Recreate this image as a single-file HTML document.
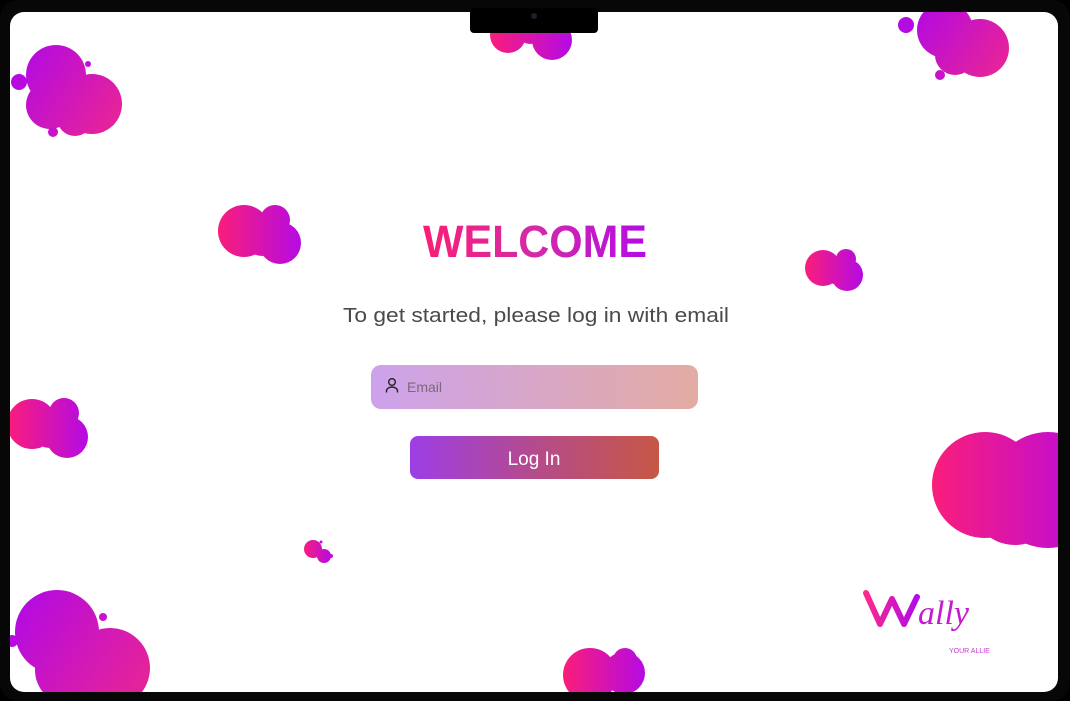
<!DOCTYPE html>
<html><head><meta charset="utf-8"><style>
html,body{margin:0;padding:0;background:#000;width:1070px;height:701px;overflow:hidden}
svg{display:block}
</style></head><body>
<svg width="1070" height="701" viewBox="0 0 1070 701" xmlns="http://www.w3.org/2000/svg">
<defs>
<linearGradient id="pp" x1="0" y1="0" x2="1" y2="0.6"><stop offset="0" stop-color="#b008e6"/><stop offset="1" stop-color="#e4229c"/></linearGradient>
<linearGradient id="kp" x1="0" y1="0" x2="1" y2="0"><stop offset="0" stop-color="#fa1e7a"/><stop offset="1" stop-color="#b40ae4"/></linearGradient>
<linearGradient id="wel" x1="0" y1="0" x2="1" y2="0"><stop offset="0" stop-color="#fb1d75"/><stop offset="0.5" stop-color="#d42aa8"/><stop offset="1" stop-color="#b40ae6"/></linearGradient>
<linearGradient id="inp" x1="0" y1="0" x2="1" y2="0"><stop offset="0" stop-color="#cda2ec"/><stop offset="1" stop-color="#e2aba2"/></linearGradient>
<linearGradient id="btn" x1="0" y1="0" x2="1" y2="0"><stop offset="0" stop-color="#9d3ee6"/><stop offset="0.5" stop-color="#b44b8c"/><stop offset="1" stop-color="#c75745"/></linearGradient>
<linearGradient id="wl" x1="0" y1="0" x2="1" y2="0"><stop offset="0" stop-color="#fb2a8e"/><stop offset="1" stop-color="#b20ae8"/></linearGradient>
<clipPath id="scr"><rect x="10" y="12" width="1048" height="680" rx="14"/></clipPath>
<mask id="m1"><g fill="#fff"><circle cx="56" cy="75" r="30"/><circle cx="92" cy="104" r="30"/><circle cx="50" cy="105" r="24"/><circle cx="75" cy="118" r="18"/></g></mask>
<mask id="m2"><g fill="#fff"><circle cx="508" cy="35" r="18"/><circle cx="552" cy="40" r="20"/><circle cx="530" cy="30" r="14"/></g></mask>
<mask id="m3"><g fill="#fff"><circle cx="945" cy="30" r="28"/><circle cx="980" cy="48" r="29"/><circle cx="955" cy="55" r="20"/></g></mask>
<mask id="m4"><g fill="#fff"><circle cx="244" cy="231" r="26"/><circle cx="280" cy="243" r="21"/><circle cx="275" cy="220" r="15"/><circle cx="262" cy="238" r="18"/></g></mask>
<mask id="m5"><g fill="#fff"><circle cx="823" cy="268" r="18"/><circle cx="847" cy="275" r="16"/><circle cx="846" cy="259" r="10"/><circle cx="835" cy="270" r="14"/></g></mask>
<mask id="m6"><g fill="#fff"><circle cx="32" cy="424" r="25"/><circle cx="67" cy="437" r="21"/><circle cx="64" cy="413" r="15"/><circle cx="50" cy="428" r="20"/></g></mask>
<mask id="m7"><g fill="#fff"><circle cx="985" cy="485" r="53"/><circle cx="1048" cy="490" r="58"/><circle cx="1015" cy="500" r="45"/></g></mask>
<mask id="m8"><g fill="#fff"><circle cx="313" cy="549" r="9"/><circle cx="324" cy="556" r="7"/></g></mask>
<mask id="m9"><g fill="#fff"><circle cx="57" cy="632" r="42"/><circle cx="110" cy="668" r="40"/><circle cx="70" cy="670" r="35"/></g></mask>
<mask id="m10"><g fill="#fff"><circle cx="590" cy="675" r="27"/><circle cx="624" cy="673" r="21"/><circle cx="625" cy="660" r="12"/></g></mask>
</defs>
<rect x="0" y="0" width="1070" height="701" rx="18" fill="#070707"/>
<rect x="10" y="12" width="1048" height="680" rx="14" fill="#fff"/>
<g clip-path="url(#scr)">
<rect x="20" y="45" width="102" height="93" fill="url(#pp)" mask="url(#m1)"/>
<circle cx="19" cy="82" r="8" fill="#b80ae0"/><circle cx="88" cy="64" r="3" fill="#c010d8"/><circle cx="53" cy="132" r="5" fill="#c812c8"/>
<rect x="490" y="16" width="82" height="46" fill="url(#kp)" mask="url(#m2)"/>
<rect x="917" y="0" width="92" height="80" fill="url(#pp)" mask="url(#m3)"/>
<circle cx="906" cy="25" r="8" fill="#b60ae2"/><circle cx="940" cy="75" r="5" fill="#c812cc"/>
<rect x="218" y="204" width="84" height="62" fill="url(#kp)" mask="url(#m4)"/>
<rect x="805" y="249" width="58" height="43" fill="url(#kp)" mask="url(#m5)"/>
<rect x="7" y="397" width="81" height="62" fill="url(#kp)" mask="url(#m6)"/>
<rect x="932" y="430" width="175" height="120" fill="url(#kp)" mask="url(#m7)"/>
<rect x="303" y="539" width="29" height="25" fill="url(#kp)" mask="url(#m8)"/>
<circle cx="331" cy="556" r="2" fill="#c010d8"/><circle cx="321" cy="542" r="1.5" fill="#c010d8"/>
<rect x="15" y="590" width="136" height="120" fill="url(#pp)" mask="url(#m9)"/>
<circle cx="103" cy="617" r="4" fill="#c812cc"/><circle cx="12" cy="641" r="6" fill="#b80ae0"/>
<rect x="563" y="647" width="83" height="56" fill="url(#kp)" mask="url(#m10)"/>
</g>
<rect x="470" y="8" width="128" height="25" rx="4" fill="#000"/>
<circle cx="534" cy="16" r="3" fill="#1a2230"/>
<text x="423" y="257" textLength="224" lengthAdjust="spacingAndGlyphs" font-family="Liberation Sans, sans-serif" font-weight="bold" font-size="45" fill="url(#wel)">WELCOME</text>
<text x="343" y="322" textLength="386" lengthAdjust="spacingAndGlyphs" font-family="Liberation Sans, sans-serif" font-size="20" fill="#4a4a4a">To get started, please log in with email</text>
<rect x="371" y="365" width="327" height="44" rx="10" fill="url(#inp)"/>
<circle cx="392" cy="382" r="3.3" fill="none" stroke="#222" stroke-width="1.4"/>
<path d="M386.5 392.5 v-1.5 a5.5 4 0 0 1 11 0 v1.5" fill="none" stroke="#222" stroke-width="1.4"/>
<text x="407" y="392" font-family="Liberation Sans, sans-serif" font-size="14" fill="#7a6a78">Email</text>
<rect x="410" y="436" width="249" height="43" rx="8" fill="url(#btn)"/>
<text x="534" y="465" text-anchor="middle" font-family="Liberation Sans, sans-serif" font-size="19" fill="#fff">Log In</text>
<path d="M866 593 L880 624 L892 599 L904 624 L917 597" fill="none" stroke="url(#wl)" stroke-width="6" stroke-linecap="round" stroke-linejoin="round"/>
<text x="918" y="624" font-family="Liberation Serif, serif" font-style="italic" font-size="34" fill="#c41ad0">ally</text>
<text x="949" y="653" font-family="Liberation Sans, sans-serif" font-size="7" fill="#c63ad0">YOUR ALLIE</text>
</svg>
</body></html>
